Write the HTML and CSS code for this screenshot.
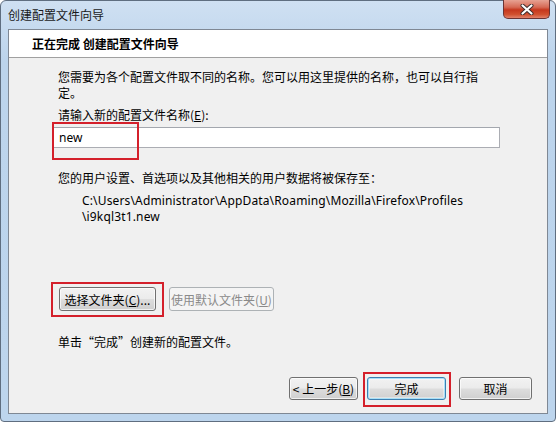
FILE: index.html
```html
<!DOCTYPE html>
<html lang="zh-CN">
<head>
  <meta charset="UTF-8">
  <title>创建配置文件向导</title>
  <link rel="stylesheet" href="styles.css">
</head>
<body>
  <div class="window">
    <div class="titlebar">
      <span class="title">创建配置文件向导</span>
      <button class="close" aria-label="关闭">
        <svg width="14" height="11" viewBox="0 0 14 11">
          <path d="M2.5 1.5 L11.5 9.5 M11.5 1.5 L2.5 9.5" stroke="#3a2a2a" stroke-width="4" stroke-linecap="round"/>
          <path d="M2.5 1.5 L11.5 9.5 M11.5 1.5 L2.5 9.5" stroke="#fff" stroke-width="2.2" stroke-linecap="round"/>
        </svg>
      </button>
    </div>

    <div class="client">
      <header class="header">正在完成 创建配置文件向导</header>

      <div class="content">
        <p class="intro">您需要为各个配置文件取不同的名称。您可以用这里提供的名称，也可以自行指定。</p>
        <label class="label" for="profileName">请输入新的配置文件名称(<u>E</u>):</label>
        <div class="name-field mark-input">
          <input id="profileName" class="input" type="text" value="new">
        </div>

        <p class="save-note">您的用户设置、首选项以及其他相关的用户数据将被保存至：</p>
        <p class="path">C:\Users\Administrator\AppData\Roaming\Mozilla\Firefox\Profiles<br>\i9kql3t1.new</p>

        <div class="folder-row">
          <span class="mark mark-folder"><button class="btn btn-folder">选择文件夹(<u>C</u>)...</button></span>
          <button class="btn btn-default-folder" disabled>使用默认文件夹(<u>U</u>)</button>
        </div>

        <p class="finish-note">单击“完成”创建新的配置文件。</p>
      </div>

      <div class="footer">
        <button class="btn btn-back">&lt; 上一步(<u>B</u>)</button>
        <span class="mark mark-finish"><button class="btn btn-primary btn-finish">完成</button></span>
        <button class="btn btn-cancel">取消</button>
      </div>
    </div>
  </div>
</body>
</html>
```

FILE: styles.css
```css
:root {
  --frame: #bcd4ec;
  --frame-light: #cfe0f2;
  --client-bg: #f0f0f0;
  --client-border: #7f8894;
  --text: #000;
  --text-disabled: #8a8a8a;
  --mark: #d4202b;
}

* {
  box-sizing: border-box;
  margin: 0;
  padding: 0;
}

body {
  width: 556px;
  height: 422px;
  overflow: hidden;
  font-family: "Noto Sans", "Noto Sans CJK SC", sans-serif;
  font-size: 12px;
  color: var(--text);
  background: #fff;
}

.window {
  width: 556px;
  height: 422px;
  display: flex;
  flex-direction: column;
  background: linear-gradient(to bottom, var(--frame-light) 0, var(--frame) 60px, #bdd5ed 100%);
  border: 1px solid #5f6e80;
  border-radius: 6px 6px 4px 4px;
}

.titlebar {
  height: 28px;
  display: flex;
  align-items: flex-start;
  justify-content: space-between;
  padding-left: 7px;
}

.title {
  line-height: 27px;
  color: #1a1a1a;
  font-family: "Noto Sans CJK SC", sans-serif;
}

.close {
  width: 47px;
  height: 19px;
  margin-right: 5px;
  margin-top: -1px;
  border: 1px solid #6b3434;
  border-top: none;
  border-radius: 0 0 5px 5px;
  background: linear-gradient(to bottom, #e7a293 0, #d66a55 40%, #c5371e 55%, #d0502f 80%, #e1816a 100%);
  display: flex;
  align-items: center;
  justify-content: center;
}

.client {
  flex: 1;
  margin: 0 7px 7px;
  background: var(--client-bg);
  border: 1px solid var(--client-border);
  display: flex;
  flex-direction: column;
}

.header {
  height: 28px;
  background: #fff;
  border-bottom: 1px solid #a0a0a0;
  padding-left: 23px;
  line-height: 28px;
  font-weight: 700;
  font-family: "Noto Sans CJK SC", sans-serif;
}

.content {
  padding: 11px 47px 0 44px;
  line-height: 16px;
}

.intro,
.label,
.save-note,
.finish-note {
  padding-left: 5px;
  font-family: "Noto Sans CJK SC", sans-serif;
}

.intro {
  padding-right: 4px;
}

.label {
  display: block;
  margin-top: 6px;
}

.name-field {
  margin-top: 4px;
}

.input {
  width: 100%;
  height: 21px;
  border: 1px solid #abadb3;
  border-top-color: #a3a7ae;
  background: #fff;
  padding: 0 5px;
  font-family: inherit;
  font-size: 12px;
  color: var(--text);
  outline: none;
}

.save-note {
  margin-top: 22px;
}

.path {
  margin-top: 7px;
  padding-left: 29px;
  letter-spacing: 0.15px;
}

.folder-row {
  margin-top: 62px;
  padding-left: 6px;
  display: flex;
  gap: 13px;
}

.finish-note {
  margin-top: 23px;
}

.footer {
  margin-top: auto;
  padding: 0 15px 13px 0;
  display: flex;
  justify-content: flex-end;
  align-items: center;
}

.btn {
  height: 23px;
  padding: 0;
  white-space: nowrap;
  border: 1px solid #707070;
  border-radius: 3px;
  background: linear-gradient(to bottom, #f2f2f2 0, #ebebeb 48%, #dddddd 52%, #cfcfcf 100%);
  box-shadow: inset 0 0 0 1px rgba(255, 255, 255, 0.7);
  font-family: "Noto Sans CJK SC", sans-serif;
  font-size: 12px;
  color: var(--text);
}

.btn-folder {
  width: 97px;
  height: 24px;
}

.btn-default-folder {
  width: 105px;
  height: 24px;
  border-color: #adb2b5;
  background: #f4f4f4;
  box-shadow: none;
  color: var(--text-disabled);
}

.btn-back {
  width: 69px;
}

.btn-primary {
  border-color: #3c7fb1;
  box-shadow: inset 0 0 0 1px #a8e0f8, inset 0 0 0 2px rgba(255, 255, 255, 0.4);
}

.btn-finish {
  width: 79px;
  margin-left: 9px;
}

.btn-cancel {
  width: 73px;
  margin-left: 13px;
}

/* red annotation boxes */
.mark,
.mark-input {
  position: relative;
  display: inline-block;
}

.mark-input {
  display: block;
}

.mark::after,
.mark-input::after {
  content: '';
  position: absolute;
  border: 2px solid var(--mark);
  pointer-events: none;
}

.mark-input::after {
  left: -1px;
  top: -5px;
  width: 83px;
  height: 34px;
}

.mark-folder::after {
  inset: -5px -8px -6px -8px;
}

.mark-finish::after {
  inset: -5px -5px -7px 5px;
}
```
